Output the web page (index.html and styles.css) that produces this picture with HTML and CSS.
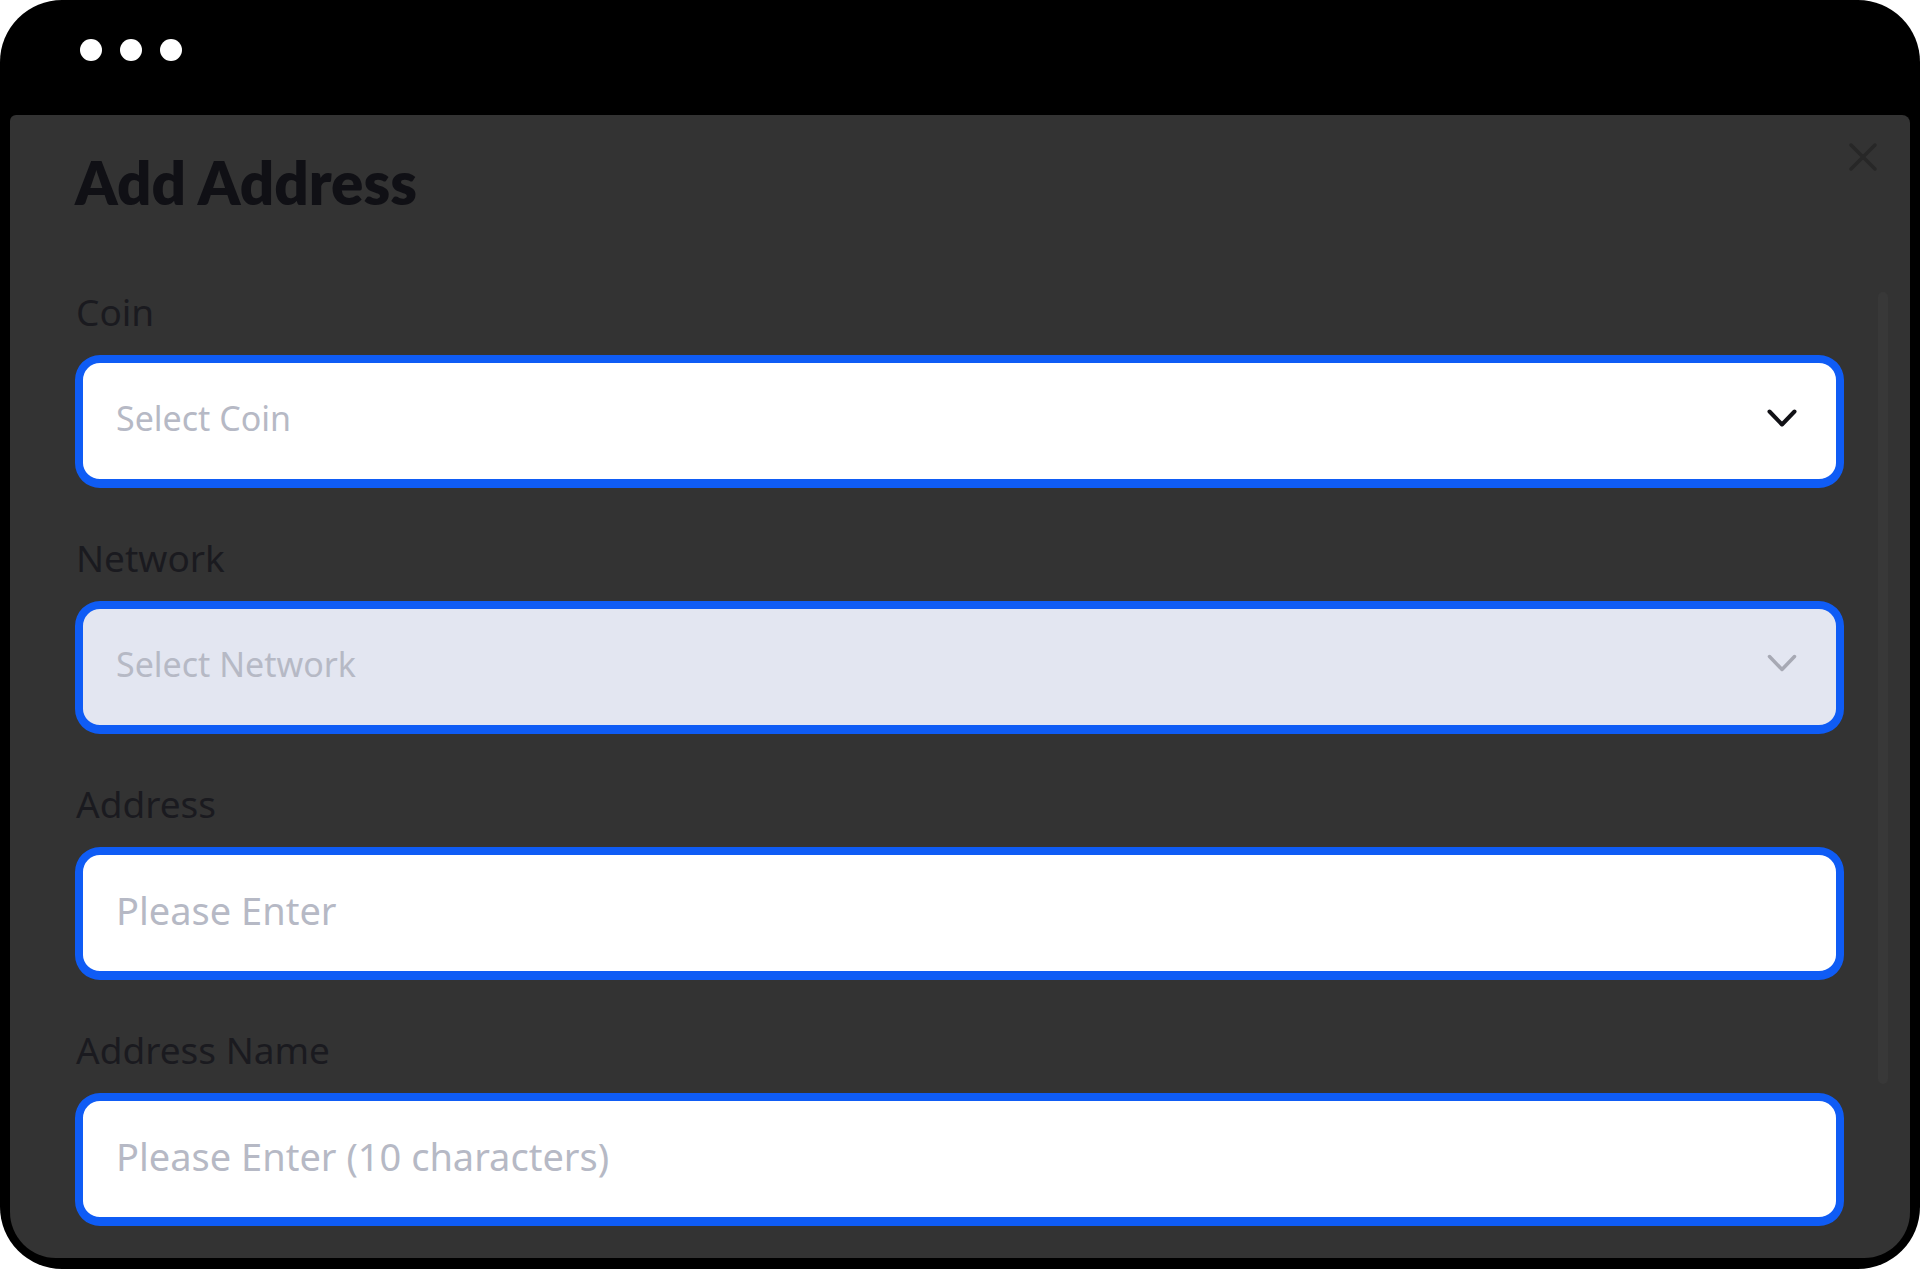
FILE: index.html
```html
<!DOCTYPE html>
<html lang="en">
<head>
<meta charset="utf-8">
<title>Add Address</title>
<link rel="stylesheet" href="styles.css">
</head>
<body>
<div class="window">
  <div class="titlebar">
    <span class="dot"></span><span class="dot"></span><span class="dot"></span>
  </div>
  <div class="panel">
    <button class="close" aria-label="Close">
      <svg width="30" height="30" viewBox="0 0 30 30"><path d="M3 3 L27 27 M27 3 L3 27" stroke="currentColor" stroke-width="3.5" stroke-linecap="round" fill="none"/></svg>
    </button>
    <div class="scrollbar"></div>
    <h1 class="title">Add Address</h1>
    <div class="fields">
      <div class="field">
        <div class="label">Coin</div>
        <div class="box">
          <span class="placeholder">Select Coin</span>
          <svg class="chev" width="30" height="19" viewBox="0 0 30 19"><path d="M2.5 2.5 L15 15.5 L27.5 2.5" stroke="currentColor" stroke-width="4" stroke-linecap="round" stroke-linejoin="round" fill="none"/></svg>
        </div>
      </div>
      <div class="field">
        <div class="label">Network</div>
        <div class="box disabled">
          <span class="placeholder">Select Network</span>
          <svg class="chev" width="30" height="19" viewBox="0 0 30 19"><path d="M2.5 2.5 L15 15.5 L27.5 2.5" stroke="currentColor" stroke-width="3.5" stroke-linecap="round" stroke-linejoin="round" fill="none"/></svg>
        </div>
      </div>
      <div class="field">
        <div class="label">Address</div>
        <div class="box">
          <span class="placeholder input">Please Enter</span>
        </div>
      </div>
      <div class="field">
        <div class="label">Address Name</div>
        <div class="box">
          <span class="placeholder input">Please Enter (10 characters)</span>
        </div>
      </div>
    </div>
  </div>
</div>
</body>
</html>
```

FILE: styles.css
```css
html, body {
  margin: 0;
  padding: 0;
  background: #ffffff;
}

.window {
  width: 1920px;
  height: 1269px;
  box-sizing: border-box;
  background: #000000;
  border-radius: 62px;
  padding: 0 10px 11px 10px;
  display: flex;
  flex-direction: column;
  overflow: hidden;
}

.titlebar {
  height: 115px;
  box-sizing: border-box;
  padding: 39px 0 0 70px;
  display: flex;
  gap: 18px;
  flex-shrink: 0;
}

.dot {
  width: 22px;
  height: 22px;
  border-radius: 50%;
  background: #ffffff;
}

.panel {
  flex: 1;
  position: relative;
  background: #333333;
  border-radius: 6px 8px 46px 46px;
  padding: 37px 66px 0 65px;
  overflow: hidden;
}

.close {
  position: absolute;
  top: 27px;
  right: 32px;
  width: 30px;
  height: 30px;
  padding: 0;
  border: 0;
  background: transparent;
  color: #272727;
  display: flex;
}

.scrollbar {
  position: absolute;
  top: 177px;
  right: 22px;
  width: 10px;
  height: 792px;
  border-radius: 5px;
  background: #383838;
}

.title {
  margin: 0;
  font-family: Lato, Inter, "Noto Sans", sans-serif;
  font-weight: 800;
  font-size: 60px;
  line-height: 60px;
  color: #101015;
  letter-spacing: 0;
}

.fields {
  margin-top: 75px;
  display: flex;
  flex-direction: column;
  gap: 45px;
}

.field {
  display: flex;
  flex-direction: column;
  gap: 18px;
}

.label {
  font-family: "Noto Sans", "Open Sans", sans-serif;
  font-size: 37px;
  line-height: 50px;
  color: #1a1a1f;
  padding-left: 1px;
}

.box {
  height: 133px;
  box-sizing: border-box;
  border: 8px solid #0f5cf5;
  border-bottom-width: 9px;
  border-radius: 25px;
  background: #ffffff;
  display: flex;
  align-items: center;
  justify-content: space-between;
  padding: 0 39px 6px 33px;
}

.box.disabled {
  background: #e3e6f1;
}

.placeholder {
  font-family: "Noto Sans", "Open Sans", sans-serif;
  font-size: 34px;
  color: #b6b9c5;
}

.placeholder.input {
  font-size: 38px;
}

.chev {
  color: #111116;
  flex-shrink: 0;
}

.disabled .chev {
  color: #a7a9b4;
  margin-bottom: 2px;
}
```
